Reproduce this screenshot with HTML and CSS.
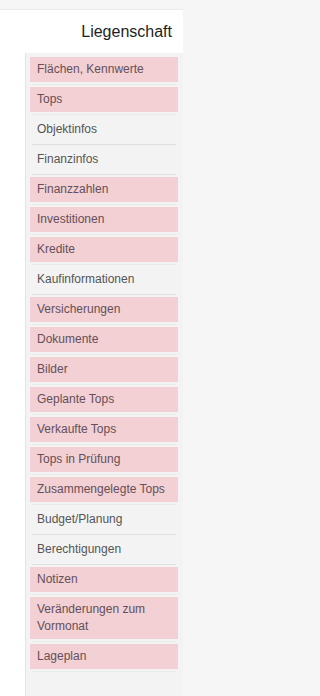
FILE: index.html
```html
<!DOCTYPE html>
<html lang="de">
<head>
<meta charset="utf-8">
<title>Liegenschaft</title>
<link rel="stylesheet" href="styles.css">
</head>
<body>
<div class="sidebar">
  <div class="header">Liegenschaft</div>
  <div class="panel">
    <ul class="menu">
      <li class="on"><span>Flächen, Kennwerte</span></li>
      <li class="on"><span>Tops</span></li>
      <li><span>Objektinfos</span></li>
      <li><span>Finanzinfos</span></li>
      <li class="on"><span>Finanzzahlen</span></li>
      <li class="on"><span>Investitionen</span></li>
      <li class="on"><span>Kredite</span></li>
      <li><span>Kaufinformationen</span></li>
      <li class="on"><span>Versicherungen</span></li>
      <li class="on"><span>Dokumente</span></li>
      <li class="on"><span>Bilder</span></li>
      <li class="on"><span>Geplante Tops</span></li>
      <li class="on"><span>Verkaufte Tops</span></li>
      <li class="on"><span>Tops in Prüfung</span></li>
      <li class="on"><span>Zusammengelegte Tops</span></li>
      <li><span>Budget/Planung</span></li>
      <li><span>Berechtigungen</span></li>
      <li class="on"><span>Notizen</span></li>
      <li class="on"><span>Veränderungen zum Vormonat</span></li>
      <li class="on"><span>Lageplan</span></li>
    </ul>
  </div>
</div>
</body>
</html>
```

FILE: styles.css
```css
html, body {
  margin: 0;
  padding: 0;
}
body {
  background: #f6f6f6;
  padding-top: 9px;
  font-family: "Liberation Sans", Arial, sans-serif;
  height: 696px;
  box-sizing: border-box;
  overflow: hidden;
}
.sidebar {
  width: 183px;
  background: #ffffff;
  display: flex;
  flex-direction: column;
  height: 687px;
}
.header {
  height: 44px;
  box-sizing: border-box;
  padding-right: 11px;
  text-align: right;
  font-size: 16px;
  line-height: 44px;
  color: #1e1e1e;
  border-top: 1px solid #ececec;
}
.panel {
  flex: 1;
  margin-left: 25px;
  background: #f3f3f3;
  border-left: 1px solid #e4e4e4;
  padding: 4px 5px 0 4px;
}
.menu {
  list-style: none;
  margin: 0;
  padding: 0;
}
.menu li {
  padding-bottom: 5px;
  position: relative;
}
.menu li::after {
  content: "";
  position: absolute;
  left: 2px;
  right: 2px;
  bottom: 2px;
  height: 1px;
  background: #dedede;
}
.menu li.on::after {
  background: #e9ece6;
}
.menu li span {
  display: block;
  padding: 4px 6px 4px 7px;
  font-size: 12px;
  line-height: 17px;
  color: #555555;
}
.menu li.on span {
  background: #f2d0d3;
  color: #654f5a;
}
```
